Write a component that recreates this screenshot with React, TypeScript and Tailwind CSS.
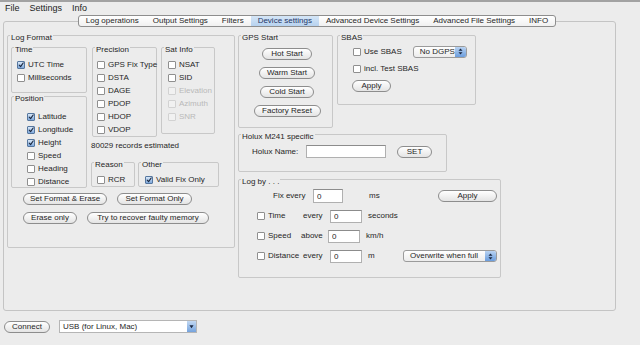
import type { ReactNode } from "react";

function Check({ checked = false, disabled = false }: { checked?: boolean; disabled?: boolean }) {
  return (
    <span
      className={`w-[8px] h-[8px] shrink-0 rounded-[1px] border flex items-center justify-center ${
        checked
          ? "border-[#56779f] bg-[linear-gradient(#d9e8f8,#7ea8dc)]"
          : disabled
          ? "border-[#d2d2d2] bg-[#f1f1f1]"
          : "border-[#8f8f8f] bg-white"
      }`}
    >
      {checked && (
        <svg viewBox="0 0 10 10" className="w-[8px] h-[8px]">
          <path d="M2 5.3 L4.3 7.6 L8.6 1.6" fill="none" stroke="#1c2940" strokeWidth="1.9" strokeLinecap="round" strokeLinejoin="round" />
        </svg>
      )}
    </span>
  );
}

function CheckRow({ label, checked, disabled }: { label: string; checked?: boolean; disabled?: boolean }) {
  return (
    <div className="h-[13px] flex items-center gap-[3px] whitespace-nowrap">
      <Check checked={checked} disabled={disabled} />
      <span className={disabled ? "text-[#b9b9b9]" : ""}>{label}</span>
    </div>
  );
}

function Btn({ children, className = "" }: { children: ReactNode; className?: string }) {
  return (
    <button
      type="button"
      className={`h-[12px] shrink-0 whitespace-nowrap rounded-full border border-[#8d8d8d] bg-[linear-gradient(#ffffff,#e4e4e4)] flex items-center justify-center leading-none text-[8px] text-[#1f1f1f] ${className}`}
    >
      {children}
    </button>
  );
}

function Group({ title, className = "", children }: { title: string; className?: string; children?: ReactNode }) {
  return (
    <div className={`shrink-0 border border-[#c8c8c8] rounded-[2px] flex flex-col ${className}`}>
      <div className="-mt-[3px] ml-[2px] w-fit whitespace-nowrap bg-[#ececec] px-[1px] leading-[9px]">{title}</div>
      {children}
    </div>
  );
}

function Arrows({ single = false }: { single?: boolean }) {
  return (
    <svg viewBox="0 0 6 8" className="w-[5px] h-[7px]">
      {single ? (
        <path d="M0.5 2.5 L5.5 2.5 L3 6Z" fill="#1a2740" />
      ) : (
        <>
          <path d="M3 0.4 L5.4 3 L0.6 3Z" fill="#1a2740" />
          <path d="M0.6 5 L5.4 5 L3 7.6Z" fill="#1a2740" />
        </>
      )}
    </svg>
  );
}

function Popup({ label, className = "" }: { label: string; className?: string }) {
  return (
    <div className={`h-[12px] shrink-0 flex rounded-[3px] border border-[#9b9b9b] bg-[linear-gradient(#ffffff,#ececec)] ${className}`}>
      <span className="flex-1 pl-[6px] flex items-center leading-none whitespace-nowrap">{label}</span>
      <span className="w-[11px] rounded-r-[2px] bg-[linear-gradient(#b9d3f2,#6b9ddd)] flex items-center justify-center">
        <Arrows />
      </span>
    </div>
  );
}

function Field({ value = "", className = "" }: { value?: string; className?: string }) {
  return (
    <input
      readOnly
      defaultValue={value}
      className={`h-[13px] shrink-0 bg-white border border-[#b0b0b0] border-t-[#8c8c8c] px-[3px] text-[8px] leading-none outline-none ${className}`}
    />
  );
}

const TABS = [
  "Log operations",
  "Output Settings",
  "Filters",
  "Device settings",
  "Advanced Device Settings",
  "Advanced File Settings",
  "INFO",
];

export default function App() {
  return (
    <div className="w-[640px] h-[345px] overflow-hidden whitespace-nowrap bg-[#ececec] text-[8px] text-[#262626] font-['Liberation_Sans',Arial,sans-serif]">
      <div className="h-[2px] bg-[#a2a2a2]" />

      {/* menu */}
      <div className="h-[12px] flex items-center gap-[10px] pl-[5px] text-[9px] leading-none text-[#1c1c1c]">
        <span>File</span>
        <span>Settings</span>
        <span>Info</span>
      </div>

      {/* tabs */}
      <div className="relative z-10 mt-[1px] flex justify-center pr-[6px]">
        <div className="h-[12px] flex rounded-[3px] border border-[#8e8e8e] bg-[linear-gradient(#ffffff,#f0f0f0)] overflow-hidden">
          {TABS.map(t => (
            <span
              key={t}
              className={`px-[7px] flex items-center leading-none ${
                t === "Device settings" ? "bg-[linear-gradient(#d5e6f7,#b7d2ef)] text-[#1e3566]" : ""
              }`}
            >
              {t}
            </span>
          ))}
        </div>
      </div>

      {/* panel */}
      <div className="-mt-[6px] ml-[3px] w-[613px] h-[290px] border border-[#c4c4c4] rounded-[3px] bg-[#ececec] flex items-start pl-[3px] pt-[13px]">
        {/* Log Format */}
        <Group title="Log Format" className="w-[228px] h-[213px]">
          <div className="pl-[3px]">
            <div className="mt-[5px] flex items-start">
              <div className="flex flex-col">
                <Group title="Time" className="w-[76px] h-[46px]">
                  <div className="pt-[4px] pl-[5px]">
                    <CheckRow label="UTC Time" checked />
                    <CheckRow label="Milliseconds" />
                  </div>
                </Group>
                <Group title="Position" className="mt-[3px] w-[76px] h-[92px]">
                  <div className="pt-[7px] pl-[15px]">
                    <CheckRow label="Latitude" checked />
                    <CheckRow label="Longitude" checked />
                    <CheckRow label="Height" checked />
                    <CheckRow label="Speed" />
                    <CheckRow label="Heading" />
                    <CheckRow label="Distance" />
                  </div>
                </Group>
              </div>

              <div className="ml-[4px] flex flex-col">
                <div className="flex items-start">
                  <Group title="Precision" className="ml-[1px] w-[65px] h-[90px]">
                    <div className="pt-[4px] pl-[4px]">
                      <CheckRow label="GPS Fix Type" />
                      <CheckRow label="DSTA" />
                      <CheckRow label="DAGE" />
                      <CheckRow label="PDOP" />
                      <CheckRow label="HDOP" />
                      <CheckRow label="VDOP" />
                    </div>
                  </Group>
                  <Group title="Sat Info" className="ml-[4px] w-[54px] h-[87px]">
                    <div className="pt-[4px] pl-[6px]">
                      <CheckRow label="NSAT" />
                      <CheckRow label="SID" />
                      <CheckRow label="Elevation" disabled />
                      <CheckRow label="Azimuth" disabled />
                      <CheckRow label="SNR" disabled />
                    </div>
                  </Group>
                </div>
                <div className="mt-[4px] leading-[9px]">80029 records estimated</div>
                <div className="mt-[12px] flex items-start">
                  <Group title="Reason" className="w-[44px] h-[25px]">
                    <div className="pt-[4px] pl-[5px]">
                      <CheckRow label="RCR" />
                    </div>
                  </Group>
                  <Group title="Other" className="ml-[3px] w-[81px] h-[25px]">
                    <div className="pt-[4px] pl-[6px]">
                      <CheckRow label="Valid Fix Only" checked />
                    </div>
                  </Group>
                </div>
              </div>
            </div>

            <div className="mt-[5px] ml-[12px] flex gap-[10px]">
              <Btn className="w-[84px]">Set Format &amp; Erase</Btn>
              <Btn className="w-[75px]">Set Format Only</Btn>
            </div>
            <div className="mt-[7px] ml-[12px] flex gap-[10px]">
              <Btn className="w-[54px]">Erase only</Btn>
              <Btn className="w-[122px]">Try to recover faulty memory</Btn>
            </div>
          </div>
        </Group>

        {/* right column */}
        <div className="ml-[3px] flex flex-col">
          <div className="flex items-start">
            <Group title="GPS Start" className="w-[95px] h-[93px]">
              <div className="pt-[6px] pl-[3px] flex flex-col items-center gap-[7px]">
                <Btn className="w-[50px]">Hot Start</Btn>
                <Btn className="w-[56px]">Warm Start</Btn>
                <Btn className="w-[54px]">Cold Start</Btn>
                <Btn className="w-[67px]">Factory Reset</Btn>
              </div>
            </Group>
            <Group title="SBAS" className="ml-[4px] w-[139px] h-[70px]">
              <div className="pt-[3px] pl-[15px]">
                <div className="h-[13px] flex items-center">
                  <CheckRow label="Use SBAS" />
                  <Popup label="No DGPS" className="ml-[11px] w-[54px]" />
                </div>
                <div className="mt-[4px]">
                  <CheckRow label="incl. Test SBAS" />
                </div>
                <Btn className="mt-[5px] -ml-[1px] w-[39px]">Apply</Btn>
              </div>
            </Group>
          </div>

          <Group title="Holux M241 specific" className="mt-[6px] w-[209px] h-[38px]">
            <div className="pt-[4px] pl-[13px] h-[13px] box-content flex items-center">
              <span className="w-[54px]">Holux Name:</span>
              <Field className="w-[80px] h-[12px]" />
              <Btn className="ml-[11px] w-[35px] h-[11px]">SET</Btn>
            </div>
          </Group>

          <Group title="Log by . . ." className="mt-[7px] w-[263px] h-[99px]">
            <div className="pt-[3px] pr-[3px] flex flex-col gap-[6px]">
              <div className="h-[14px] flex items-center">
                <span className="ml-[34px] w-[40px]">Fix every</span>
                <Field value="0" className="w-[30px] h-[14px]" />
                <span className="ml-[26px]">ms</span>
                <Btn className="ml-auto w-[59px]">Apply</Btn>
              </div>
              {[
                ["Time", "every", "seconds"],
                ["Speed", "above", "km/h"],
                ["Distance", "every", "m"],
              ].map(([label, word, unit]) => (
                <div key={label} className="h-[14px] flex items-center">
                  <span className="ml-[18px]">
                    <Check />
                  </span>
                  <span className="ml-[3px] w-[35px]">{label}</span>
                  <span className={`w-[27px] ${word === "above" ? "-ml-[2px] pr-[2px]" : ""}`}>{word}</span>
                  <Field value="0" className="w-[32px]" />
                  <span className="ml-[6px]">{unit}</span>
                  {unit === "m" && <Popup label="Overwrite when full" className="ml-auto w-[94px]" />}
                </div>
              ))}
            </div>
          </Group>
        </div>
      </div>

      {/* bottom */}
      <div className="mt-[9px] pl-[4px] flex items-center">
        <Btn className="w-[46px]">Connect</Btn>
        <div className="ml-[9px] w-[138px] h-[13px] flex border border-[#b5b5b5] bg-white">
          <span className="flex-1 pl-[3px] flex items-center leading-none">USB (for Linux, Mac)</span>
          <span className="w-[9px] bg-[linear-gradient(#c3d9f3,#75a3dd)] flex items-center justify-center">
            <Arrows single />
          </span>
        </div>
      </div>
    </div>
  );
}
